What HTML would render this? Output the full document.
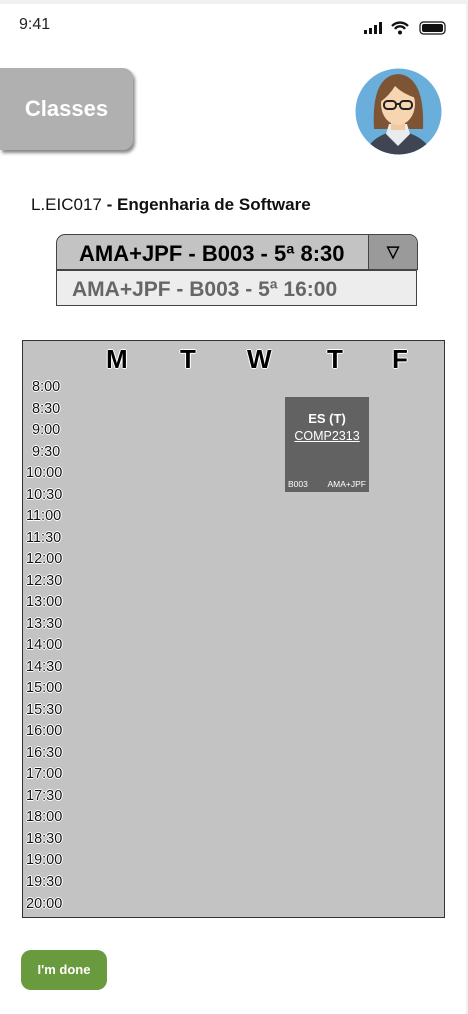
<!DOCTYPE html><html><head><meta charset="utf-8"><style>
body{margin:0;width:468px;height:1014px;background:#f0f0f0;font-family:"Liberation Sans",sans-serif;position:relative;overflow:hidden}
.page{position:absolute;left:0;top:4px;width:466px;height:1010px;background:#fff}
.a{position:absolute}
.t{font-size:14.5px;color:#111;text-shadow:0 0 1px #fff,0 0 1px #fff,1px 0 #fff,-1px 0 #fff,0 1px #fff,0 -1px #fff;left:26px}
.d{font-size:26px;font-weight:bold;color:#000;top:344px;text-shadow:1px 0 #fff,-1px 0 #fff,0 1px #fff,0 -1px #fff}
</style></head><body><div class="page"></div>
<div class="a" style="left:19px;top:16px;font-size:16px;color:#222">9:41</div>
<svg class="a" style="left:362px;top:20px" width="90" height="18"><rect x="2" y="10" width="3" height="4" fill="#111"/><rect x="7" y="8" width="3" height="6" fill="#111"/><rect x="12" y="5" width="3" height="9" fill="#111"/><rect x="17" y="2" width="3" height="12" fill="#111"/>
<path d="M30 6a11 11 0 0 1 16 0M33 9a6 6 0 0 1 10 0" stroke="#111" stroke-width="2.3" fill="none"/><circle cx="38" cy="12.5" r="2" fill="#111"/>
<rect x="58" y="2" width="25" height="12" rx="3.5" fill="none" stroke="#111" stroke-width="1.2"/><rect x="60" y="4" width="21" height="8" rx="2" fill="#111"/></svg>
<div class="a" style="left:0;top:68px;width:133px;height:82px;background:#b0b0b0;border-radius:0 10px 10px 0;box-shadow:2px 3px 3px #888;color:#fff;font-weight:bold;font-size:22px;line-height:82px;text-align:center">Classes</div>
<svg class="a" style="left:355px;top:68px" width="87" height="87"><defs><clipPath id="c"><circle cx="43.5" cy="43.5" r="43"/></clipPath></defs><circle cx="43.5" cy="43.5" r="43" fill="#6aaedb"/><g clip-path="url(#c)">
<path d="M19 61 Q16 8 43 6 Q70 8 68 61Z" fill="#7d5535"/><path d="M8 92 Q12 68 43 62 Q74 68 80 92Z" fill="#404553"/><path d="M31 66 L43 78 L55 66 L52 56 L34 56Z" fill="#e9ecef"/><rect x="36" y="48" width="14" height="14" fill="#f0c9a0"/><ellipse cx="43" cy="36" rx="17" ry="21" fill="#f7d5b1"/><path d="M25 34 Q26 12 43 13 Q61 13 61 30 Q48 26 40 18 Q34 28 25 34Z" fill="#7d5535"/>
<rect x="29" y="33" width="12" height="8" rx="3.5" fill="none" stroke="#222" stroke-width="2"/><rect x="45" y="33" width="12" height="8" rx="3.5" fill="none" stroke="#222" stroke-width="2"/><line x1="41" y1="36" x2="45" y2="36" stroke="#222" stroke-width="2"/></g></svg>
<div class="a" style="left:31px;top:195px;font-size:17px;color:#111">L.EIC017 <b>- Engenharia de Software</b></div>
<div class="a" style="left:56px;top:234px;width:360px;height:34px;background:#c3c3c3;border:1.5px solid #444;border-radius:9px 9px 0 0;font-size:22px;font-weight:bold;line-height:38px;box-sizing:content-box"><span style="margin-left:22px">AMA+JPF - B003 - 5ª 8:30</span><div class="a" style="right:0;top:0;width:48px;height:34px;background:#9a9a9a;border-left:1.5px solid #444;border-radius:0 9px 0 0;font-size:16px;text-align:center;line-height:36px">▽</div></div>
<div class="a" style="left:56px;top:270px;width:359px;height:34px;background:#ededed;border:1.5px solid #444;font-size:21px;font-weight:bold;color:#666;line-height:38px"><span style="margin-left:15px">AMA+JPF - B003 - 5ª 16:00</span></div>
<div class="a" style="left:22px;top:340px;width:421px;height:576px;background:#c3c3c3;border:1.5px solid #333"></div>
<div class="a d" style="left:106px">M</div><div class="a d" style="left:180px">T</div><div class="a d" style="left:247px">W</div><div class="a d" style="left:327px">T</div><div class="a d" style="left:392px">F</div>
<div class="a" style="left:285px;top:397px;width:84px;height:95px;background:#626262;color:#fff;text-align:center">
<div style="margin-top:14px;font-size:13px;font-weight:bold">ES (T)</div><div style="font-size:12.5px;text-decoration:underline;margin-top:3px">COMP2313</div>
<div class="a" style="left:3px;top:82px;font-size:8.5px">B003</div><div class="a" style="right:3px;top:82px;font-size:8.5px">AMA+JPF</div></div>
<div class="a" style="left:21px;top:950px;width:86px;height:40px;background:#6a9a3e;border-radius:10px;color:#fff;font-size:13px;font-weight:bold;text-align:center;line-height:40px">I'm done</div>
<div style="position:absolute;left:0;top:0">
<div class="a t" style="top:379px;left:32px">8:00</div><div class="a t" style="top:401px;left:32px">8:30</div><div class="a t" style="top:422px;left:32px">9:00</div><div class="a t" style="top:444px;left:32px">9:30</div>
<div class="a t" style="top:465px">10:00</div><div class="a t" style="top:487px">10:30</div><div class="a t" style="top:508px">11:00</div><div class="a t" style="top:530px">11:30</div><div class="a t" style="top:551px">12:00</div><div class="a t" style="top:573px">12:30</div><div class="a t" style="top:594px">13:00</div><div class="a t" style="top:616px">13:30</div><div class="a t" style="top:637px">14:00</div><div class="a t" style="top:659px">14:30</div><div class="a t" style="top:680px">15:00</div><div class="a t" style="top:702px">15:30</div><div class="a t" style="top:723px">16:00</div><div class="a t" style="top:745px">16:30</div><div class="a t" style="top:766px">17:00</div><div class="a t" style="top:788px">17:30</div><div class="a t" style="top:809px">18:00</div><div class="a t" style="top:831px">18:30</div><div class="a t" style="top:852px">19:00</div><div class="a t" style="top:874px">19:30</div><div class="a t" style="top:896px">20:00</div></div>
</body></html>
